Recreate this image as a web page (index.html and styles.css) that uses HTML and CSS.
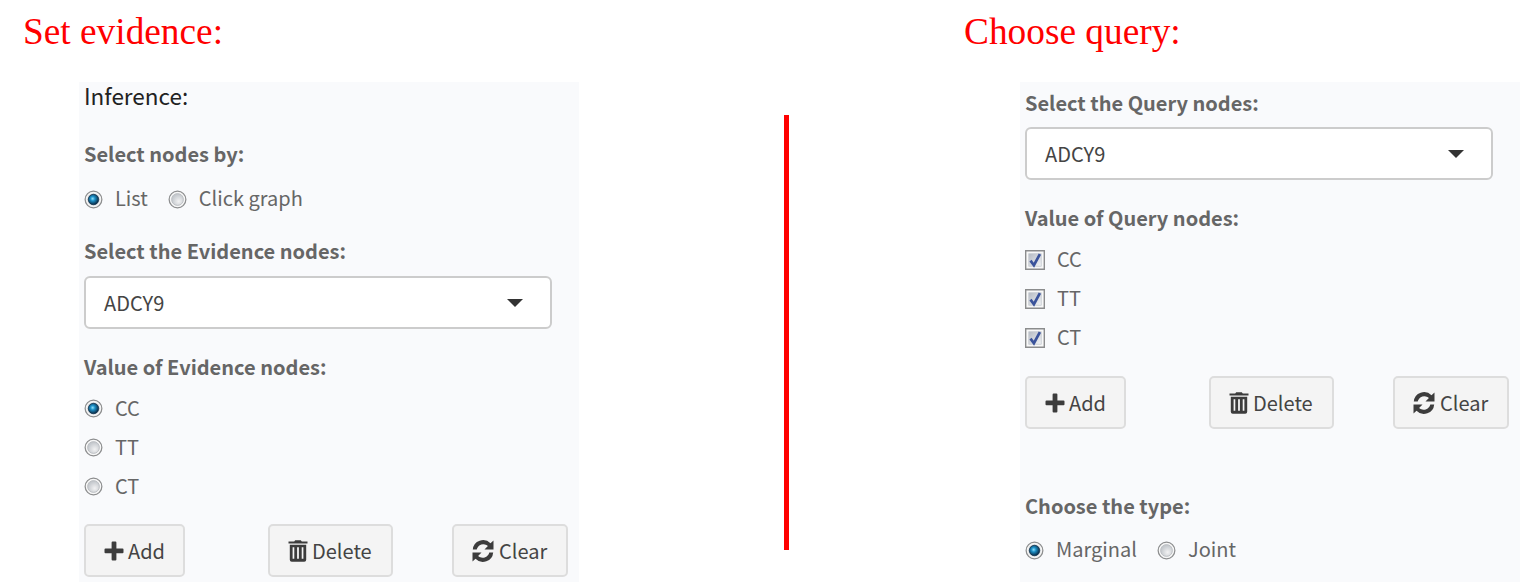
FILE: index.html
```html
<!DOCTYPE html>
<html lang="en">
<head>
<meta charset="utf-8">
<title>Inference</title>
<link rel="stylesheet" href="styles.css">
</head>
<body>
<svg class="defs" width="0" height="0" aria-hidden="true">
  <defs>
    <radialGradient id="well" cx="0.6" cy="0.65" r="0.6"><stop offset="0" stop-color="#f2f2f3"/><stop offset="1" stop-color="#c3c7cc"/></radialGradient>
    <radialGradient id="bead" cx="0.42" cy="0.42" r="0.55"><stop offset="0" stop-color="#8fe0fa"/><stop offset="0.4" stop-color="#1c8fc6"/><stop offset="1" stop-color="#0c3553"/></radialGradient>
    <linearGradient id="box" x1="0" y1="0" x2="1" y2="1"><stop offset="0" stop-color="#b4bac4"/><stop offset="1" stop-color="#f4f5f7"/></linearGradient>
    <symbol id="radio" viewBox="0 0 20 20"><circle cx="10" cy="10" r="8.8" fill="#f7f7f7" stroke="#8c8d8e" stroke-width="1.3"/><circle cx="10" cy="10" r="6.2" fill="url(#well)" stroke="#bcbfc3"/></symbol>
    <symbol id="radio-on" viewBox="0 0 20 20"><circle cx="10" cy="10" r="8.8" fill="#f4f4f4" stroke="#8c8d8e" stroke-width="1.3"/><circle cx="10" cy="10" r="6.3" fill="#aeb9c2"/><circle cx="10" cy="10" r="5.4" fill="url(#bead)" stroke="#12344e" stroke-width="0.8"/></symbol>
    <symbol id="check" viewBox="0 0 20 20"><path d="M.7.7h18.6v18.6H.7z" fill="#f8f8f8" stroke="#8b8c8d" stroke-width="1.4"/><path d="M3.7 3.7h12.6v12.6H3.7z" fill="url(#box)" stroke="#c5c9cf" stroke-width="0.8"/><path d="M5.5 10.6l3.4 4.6 6-11" fill="none" stroke="#3b539b" stroke-width="2.7"/></symbol>
    <symbol id="plus" viewBox="0 0 20 20"><path d="M8.6.5h2.8q1 0 1 1v6.1h6.1q1 0 1 1v2.6q0 1-1 1h-6.1v6.3q0 1-1 1H8.6q-1 0-1-1v-6.3H1.5q-1 0-1-1V8.600q0-1 1-1h6.100V1.500q0-1 1-1z"/></symbol>
    <symbol id="trash" viewBox="0 0 20 22"><path d="M.5 1.600h5.700l1-1.300h5.600l1 1.300h5.700v2H.5zM1.800 4.800h16.400v15q0 2-2 2H3.800q-2 0-2-2zM4.600 7.300v11.500h1.700V7.300zm4.500 0v11.500h1.800V7.300zm4.600 0v11.500h1.700V7.300z" fill-rule="evenodd"/></symbol>
    <symbol id="refresh" viewBox="0 0 22 22"><path d="M.8 9.500A10.300 10.300 0 0 1 18.500 3.300L21.500.5v9h-9l3.400-3.500A6.800 6.800 0 0 0 4.700 9.500zM21.200 12.500A10.300 10.300 0 0 1 3.500 18.700L.5 21.500v-9h9L6.100 16a6.800 6.800 0 0 0 11.200-3.500z"/></symbol>
  </defs>
</svg>
<main class="page">
  <section class="column">
    <h1 class="heading heading-evidence">Set evidence:</h1>
    <div class="panel panel-evidence">
      <h2 class="title">Inference:</h2>
      <div class="label label-nodes">Select nodes by:</div>
      <div class="inline-options">
        <div class="option"><svg class="mark"><use href="#radio-on"/></svg><span>List</span></div>
        <div class="option"><svg class="mark"><use href="#radio"/></svg><span>Click graph</span></div>
      </div>
      <div class="label label-list">Select the Evidence nodes:</div>
      <div class="select"><span>ADCY9</span><i class="caret"></i></div>
      <div class="label label-value">Value of Evidence nodes:</div>
      <div class="options">
        <div class="option"><svg class="mark"><use href="#radio-on"/></svg><span>CC</span></div>
        <div class="option"><svg class="mark"><use href="#radio"/></svg><span>TT</span></div>
        <div class="option"><svg class="mark"><use href="#radio"/></svg><span>CT</span></div>
      </div>
      <div class="actions">
        <button class="button add"><svg class="icon-plus"><use href="#plus"/></svg><span>Add</span></button>
        <button class="button delete"><svg class="icon-trash"><use href="#trash"/></svg><span>Delete</span></button>
        <button class="button clear"><svg class="icon-refresh"><use href="#refresh"/></svg><span>Clear</span></button>
      </div>
    </div>
  </section>
  <div class="divider"></div>
  <section class="column">
    <h1 class="heading heading-query">Choose query:</h1>
    <div class="panel panel-query">
      <div class="label label-query">Select the Query nodes:</div>
      <div class="select"><span>ADCY9</span><i class="caret"></i></div>
      <div class="label label-value">Value of Query nodes:</div>
      <div class="options">
        <div class="option"><svg class="mark check"><use href="#check"/></svg><span>CC</span></div>
        <div class="option"><svg class="mark check"><use href="#check"/></svg><span>TT</span></div>
        <div class="option"><svg class="mark check"><use href="#check"/></svg><span>CT</span></div>
      </div>
      <div class="actions">
        <button class="button add"><svg class="icon-plus"><use href="#plus"/></svg><span>Add</span></button>
        <button class="button delete"><svg class="icon-trash"><use href="#trash"/></svg><span>Delete</span></button>
        <button class="button clear"><svg class="icon-refresh"><use href="#refresh"/></svg><span>Clear</span></button>
      </div>
      <div class="label label-type">Choose the type:</div>
      <div class="inline-options">
        <div class="option"><svg class="mark"><use href="#radio-on"/></svg><span>Marginal</span></div>
        <div class="option"><svg class="mark"><use href="#radio"/></svg><span>Joint</span></div>
      </div>
    </div>
  </section>
</main>
</body>
</html>
```
FILE: styles.css
```css
* { box-sizing: border-box; }
body {
  margin: 0;
  background: #fff;
  color: #666;
  font-family: "Noto Sans CJK SC", "Noto Sans", sans-serif;
  font-size: 20px;
  line-height: 28px;
}
.defs { display: block; height: 0; }
.page {
  display: grid;
  grid-template-columns: 579px 1fr 580px;
  width: 1520px;
  height: 582px;
  overflow: hidden;
}
.column { display: flex; flex-direction: column; }
.heading {
  margin: 0;
  height: 82px;
  padding-top: 11px;
  color: #f00;
  font: 400 37.33px/42px "Liberation Serif", serif;
  white-space: nowrap;
}
.heading-evidence { padding-left: 23px; }
.heading-query { padding-left: 24px; }
.panel {
  width: 500px;
  height: 500px;
  padding-left: 5px;
  background: #f9fafc;
  align-self: flex-end;
}
.divider { width: 5px; height: 435px; margin: 115px 0 0 205px; background: #f00; }
.title { margin: 0; color: #222; font-size: 22.500px; font-weight: 400; line-height: 27px; }
.label { height: 28px; font-weight: 700; white-space: nowrap; }
.label-nodes { margin-top: 31px; }
.label-list { margin-top: 24px; }
.label-value { margin-top: 24px; }
.label-query { padding-top: 0; }
.panel-query { padding-top: 7px; }
.label-type { margin-top: 63px; }
.inline-options { display: flex; gap: 20px; height: 28px; margin-top: 17px; }
.panel-query .inline-options { margin-top: 16px; }
.option { display: flex; align-items: center; gap: 12px; white-space: nowrap; }
.option span { padding-bottom: 2px; }
.options { margin-top: 8px; }
.options .option { height: 39px; }
.mark { width: 19px; height: 19px; flex: none; }
.check { width: 20px; height: 20px; }
.select {
  display: flex;
  align-items: center;
  justify-content: space-between;
  width: 468px;
  height: 53px;
  margin-top: 11px;
  padding: 0 27px 0 18px;
  border: 2px solid #ccc;
  border-radius: 6px;
  background: #fff;
  color: #444;
}
.panel-query .select { margin-top: 10px; }
.caret { border: 8px solid transparent; border-top-color: #333; border-bottom: 0; }
.actions { display: flex; margin-top: 19px; }
.panel-evidence .actions { margin-top: 18px; }
.button {
  display: flex;
  align-items: center;
  height: 53px;
  padding: 0 0 0 18px;
  border: 2px solid #ddd;
  border-radius: 5px;
  background: #f4f4f4;
  color: #444;
  font: inherit;
  white-space: nowrap;
}
.button svg { flex: none; fill: #3c3c3c; }
.add { width: 101px; }
.delete { width: 125px; margin-left: 83px; }
.clear { width: 116px; margin-left: 59px; }
.icon-plus { width: 20px; height: 20px; margin-right: 4px; }
.icon-trash { width: 20px; height: 22px; margin-right: 4px; }
.icon-refresh { width: 22px; height: 22px; margin-right: 5px; }
```
